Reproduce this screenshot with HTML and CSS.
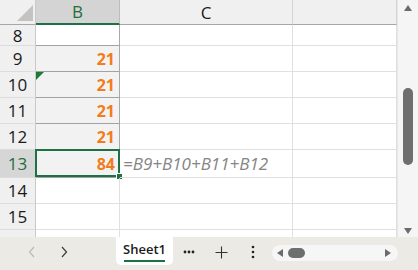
FILE: index.html
```html
<!DOCTYPE html>
<html lang="en">
<head>
    <meta charset="UTF-8">
    <title>Sheet1</title>
    <link rel="stylesheet" href="styles.css">
</head>
<body>

<div class="app">
    <div class="main">
        <div class="sheet">
            <!-- header row -->
            <div class="corner"><span class="corner-tri"></span></div>
            <div class="col-head active">B</div>
            <div class="col-head">C</div>
            <div class="col-head"></div>

            <div class="row-head">8</div>
            <div class="cell b b-top"></div>
            <div class="cell"></div>
            <div class="cell"></div>

            <div class="row-head">9</div>
            <div class="cell b shade num">21</div>
            <div class="cell"></div>
            <div class="cell"></div>

            <div class="row-head">10</div>
            <div class="cell b shade num"><span class="err-tri"></span>21</div>
            <div class="cell"></div>
            <div class="cell"></div>

            <div class="row-head">11</div>
            <div class="cell b shade num">21</div>
            <div class="cell"></div>
            <div class="cell"></div>

            <div class="row-head">12</div>
            <div class="cell b shade num">21</div>
            <div class="cell"></div>
            <div class="cell"></div>

            <div class="row-head active">13</div>
            <div class="cell b shade num selected">84<span class="sel-box"></span><span class="sel-handle"></span></div>
            <div class="cell formula">=B9+B10+B11+B12</div>
            <div class="cell"></div>

            <div class="row-head">14</div>
            <div class="cell"></div>
            <div class="cell"></div>
            <div class="cell"></div>

            <div class="row-head">15</div>
            <div class="cell"></div>
            <div class="cell"></div>
            <div class="cell"></div>

            <div class="row-head">16</div>
            <div class="cell"></div>
            <div class="cell"></div>
            <div class="cell"></div>
        </div>

        <div class="vscroll">
            <svg class="arrow" width="10" height="8" viewBox="0 0 10 8"><path d="M5 1 L9 7 L1 7 Z" fill="#6b6b6b"/></svg>
            <div class="vthumb"></div>
            <svg class="arrow down" width="10" height="8" viewBox="0 0 10 8"><path d="M1 1 L9 1 L5 7 Z" fill="#6b6b6b"/></svg>
        </div>
    </div>

    <div class="bottom-bar">
        <span class="btn">
            <svg width="8" height="12" viewBox="0 0 8 12"><path d="M6 1 L1.5 6 L6 11" fill="none" stroke="#b9b9b9" stroke-width="1.2"/></svg>
        </span>
        <span class="btn">
            <svg width="8" height="12" viewBox="0 0 8 12"><path d="M2 1 L6.5 6 L2 11" fill="none" stroke="#3c3c3c" stroke-width="1.2"/></svg>
        </span>

        <div class="tab">Sheet1</div>

        <span class="btn">
            <svg width="12" height="4" viewBox="0 0 12 4"><circle cx="2" cy="2" r="1.4" fill="#222"/><circle cx="6" cy="2" r="1.4" fill="#222"/><circle cx="10" cy="2" r="1.4" fill="#222"/></svg>
        </span>
        <span class="btn">
            <svg width="13" height="13" viewBox="0 0 13 13"><path d="M6.5 0.5 V12.5 M0.5 6.5 H12.5" stroke="#333" stroke-width="1.1"/></svg>
        </span>
        <span class="btn">
            <svg width="4" height="14" viewBox="0 0 4 14"><circle cx="2" cy="2" r="1.3" fill="#222"/><circle cx="2" cy="7" r="1.3" fill="#222"/><circle cx="2" cy="12" r="1.3" fill="#222"/></svg>
        </span>

        <div class="hscroll">
            <svg width="8" height="10" viewBox="0 0 8 10"><path d="M7 1 L7 9 L1 5 Z" fill="#6b6b6b"/></svg>
            <div class="hthumb"></div>
            <svg class="right" width="8" height="10" viewBox="0 0 8 10"><path d="M1 1 L7 5 L1 9 Z" fill="#6b6b6b"/></svg>
        </div>
    </div>
</div>

</body>
</html>
```

FILE: styles.css
```css
body {
    margin: 0;
    font-family: 'Open Sans', 'Noto Sans', sans-serif;
    background: #fff;
    color: #222;
}

.app {
    width: 418px;
    height: 270px;
    display: flex;
    flex-direction: column;
    overflow: hidden;
}

.main {
    display: flex;
    height: 237px;
}

/* grid */

.sheet {
    width: 397px;
    height: 237px;
    overflow: hidden;
    display: grid;
    grid-template-columns: 36px 84px 173px 104px;
    grid-template-rows: 25px 21px 26px 26px 26px 26px 28px 26px 26px 26px;
}

.sheet > div {
    box-sizing: border-box;
}

.corner {
    background: #f0f0f0;
    border-right: 1px solid #c9c9c9;
    border-bottom: 1px solid #a6a6a6;
    position: relative;
}

.corner-tri {
    position: absolute;
    left: 17px;
    top: 5px;
    width: 0;
    height: 0;
    border-left: 16px solid transparent;
    border-bottom: 16px solid #c3c3c3;
}

.col-head {
    background: #f0f0f0;
    border-right: 1px solid #d4d4d4;
    border-bottom: 1px solid #a6a6a6;
    font-size: 17px;
    display: flex;
    align-items: center;
    justify-content: center;
    color: #1a1a1a;
}

.col-head.active {
    background: #d4d4d4;
    color: #1e6e3e;
    border-bottom: 2px solid #1e7145;
    border-right-color: #bdbdbd;
}

.row-head {
    background: #f0f0f0;
    border-right: 1px solid #c9c9c9;
    border-bottom: 1px solid #dcdcdc;
    font-size: 17px;
    display: flex;
    align-items: center;
    justify-content: center;
    color: #1a1a1a;
}

.row-head.active {
    background: #d6d6d6;
    color: #1e6e3e;
}

.cell {
    border-right: 1px solid #e0e0e0;
    border-bottom: 1px solid #e0e0e0;
    position: relative;
}

.cell.b {
    border-right-color: #a9a9a9;
}

.cell.b-top {
    border-bottom-color: #a2a2a2;
}

.cell.shade {
    background: #f2f2f2;
    border-bottom-color: #a2a2a2;
}

.num {
    color: #f27b1b;
    font-weight: 700;
    font-size: 16px;
    text-align: right;
    padding-right: 4px;
    line-height: 26px;
}

.err-tri {
    position: absolute;
    left: 0;
    top: 0;
    width: 0;
    height: 0;
    border-top: 8px solid #1b7a36;
    border-right: 8px solid transparent;
}

.selected {
    line-height: 28px;
}

.sel-box {
    position: absolute;
    left: -1px;
    top: -1px;
    right: -1px;
    bottom: 0;
    border: 2px solid #1e7145;
}

.sel-handle {
    position: absolute;
    right: -3px;
    bottom: -2px;
    width: 5px;
    height: 5px;
    background: #1e7145;
    outline: 1px solid #fff;
}

.formula {
    color: #858585;
    font-style: italic;
    font-size: 17px;
    line-height: 27px;
    padding-left: 3px;
    white-space: nowrap;
}

/* vertical scrollbar */

.vscroll {
    width: 21px;
    background: #f5f5f5;
    border-left: 1px solid #e6e6e6;
    box-sizing: border-box;
    display: flex;
    flex-direction: column;
    align-items: center;
    padding-top: 4px;
}

.vthumb {
    width: 10px;
    height: 77px;
    margin-top: 76px;
    background: #6e6e6e;
    border-radius: 5px;
}

.vscroll .down {
    margin-top: auto;
    margin-bottom: 2px;
}

/* bottom bar */

.bottom-bar {
    height: 33px;
    background: #ebeae4;
    display: flex;
    align-items: flex-start;
    padding-left: 16px;
}

.btn {
    width: 32px;
    height: 30px;
    display: flex;
    align-items: center;
    justify-content: center;
}

.tab {
    margin-left: 36px;
    width: 57px;
    height: 28px;
    background: #fff;
    border-radius: 0 0 5px 5px;
    font-size: 13px;
    font-weight: 600;
    color: #1a1a1a;
    display: flex;
    flex-direction: column;
    align-items: center;
    padding-top: 3px;
    box-sizing: border-box;
    line-height: 18px;
}

.tab::after {
    content: "";
    width: 41px;
    height: 2px;
    background: #1e7145;
    margin-top: 2px;
}

.hscroll {
    margin-left: 3px;
    margin-top: 8px;
    width: 126px;
    height: 16px;
    background: #f6f6f6;
    border-radius: 8px;
    display: flex;
    align-items: center;
    padding-left: 4px;
    box-sizing: border-box;
}

.hthumb {
    width: 17px;
    height: 10px;
    margin-left: 4px;
    background: #6e6e6e;
    border-radius: 5px;
}

.hscroll .right {
    margin-left: auto;
    margin-right: 6px;
}
```
